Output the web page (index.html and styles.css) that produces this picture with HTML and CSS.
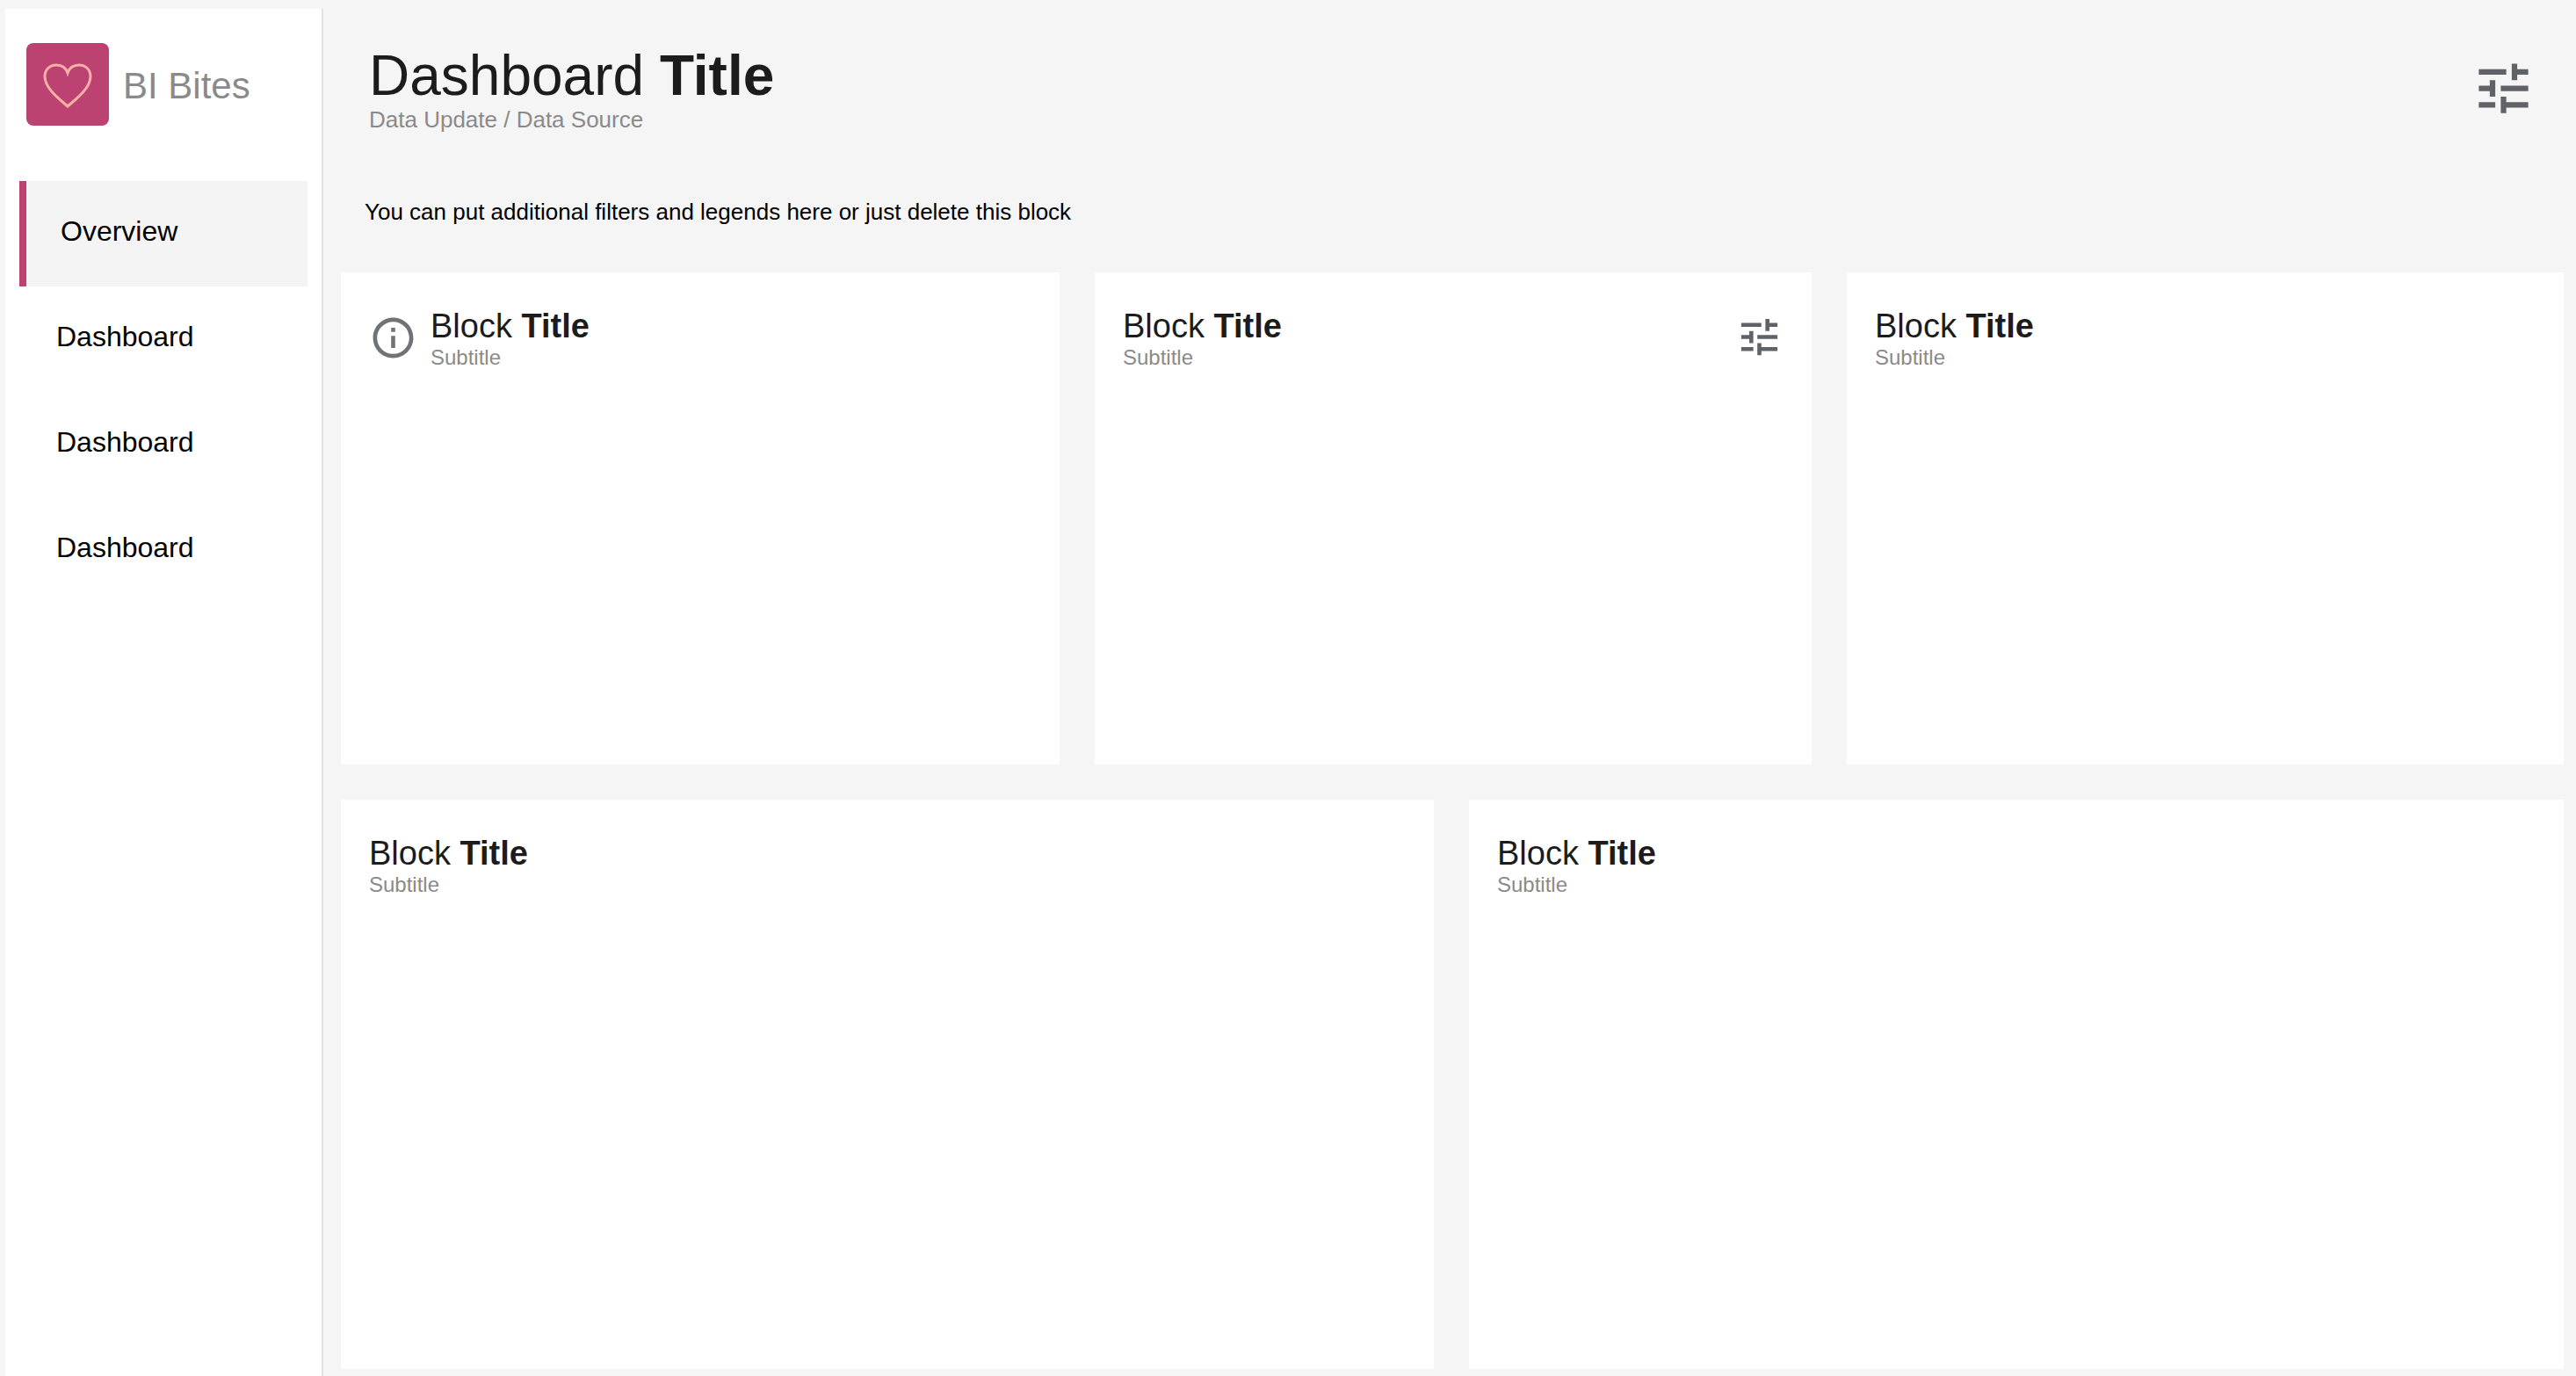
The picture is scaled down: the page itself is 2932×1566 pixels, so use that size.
FILE: index.html
```html
<!DOCTYPE html>
<html lang="en">
<head>
<meta charset="utf-8">
<title>BI Bites Dashboard</title>
<link rel="stylesheet" href="styles.css">
</head>
<body>
<div class="app">
  <aside class="sidebar">
    <div class="brand">
      <div class="logo">
        <svg class="logo-heart" viewBox="0 0 60 54"><path d="M30 50 C22 43 4 30 4 16 C4 8 10 3 17 3 C23 3 28 6 30 12 C32 6 37 3 43 3 C50 3 56 8 56 16 C56 30 38 43 30 50 Z"/></svg>
      </div>
      <span class="brand-name">BI Bites</span>
    </div>
    <nav class="nav">
      <a class="nav-item active">Overview</a>
      <a class="nav-item">Dashboard</a>
      <a class="nav-item">Dashboard</a>
      <a class="nav-item">Dashboard</a>
    </nav>
  </aside>
  <main class="main">
    <header class="page-header">
      <div>
        <h1 class="page-title">Dashboard <b>Title</b></h1>
        <p class="page-sub">Data Update / Data Source</p>
      </div>
      <svg class="tune-lg" viewBox="0 0 24 24"><path d="M3 17v2h6v-2H3zM3 5v2h10V5H3zm10 16v-2h8v-2h-8v-2h-2v6h2zM7 9v2H3v2h4v2h2V9H7zm14 4v-2H11v2h10zm-6-4h2V7h4V5h-4V3h-2v6z"/></svg>
    </header>
    <p class="filters">You can put additional filters and legends here or just delete this block</p>
    <section class="row row-three">
      <article class="card">
        <svg class="info" viewBox="0 0 24 24"><path d="M11 7h2v2h-2zm0 4h2v6h-2zm1-9C6.48 2 2 6.48 2 12s4.48 10 10 10 10-4.48 10-10S17.52 2 12 2zm0 18c-4.41 0-8-3.59-8-8s3.59-8 8-8 8 3.59 8 8-3.59 8-8 8z"/></svg>
        <div class="card-head"><h2 class="card-title">Block <b>Title</b></h2><p class="card-sub">Subtitle</p></div>
      </article>
      <article class="card">
        <div class="card-head"><h2 class="card-title">Block <b>Title</b></h2><p class="card-sub">Subtitle</p></div>
        <svg class="tune" viewBox="0 0 24 24"><path d="M3 17v2h6v-2H3zM3 5v2h10V5H3zm10 16v-2h8v-2h-8v-2h-2v6h2zM7 9v2H3v2h4v2h2V9H7zm14 4v-2H11v2h10zm-6-4h2V7h4V5h-4V3h-2v6z"/></svg>
      </article>
      <article class="card">
        <div class="card-head"><h2 class="card-title">Block <b>Title</b></h2><p class="card-sub">Subtitle</p></div>
      </article>
    </section>
    <section class="row row-two">
      <article class="card">
        <div class="card-head"><h2 class="card-title">Block <b>Title</b></h2><p class="card-sub">Subtitle</p></div>
      </article>
      <article class="card">
        <div class="card-head"><h2 class="card-title">Block <b>Title</b></h2><p class="card-sub">Subtitle</p></div>
      </article>
    </section>
  </main>
</div>
</body>
</html>
```
FILE: styles.css
```css
* { box-sizing: border-box; margin: 0; padding: 0; }
html, body { height: 100%; overflow: hidden; }
body { background: #f5f5f5; font-family: "Liberation Sans", Arial, sans-serif; }
.app { display: flex; height: 1566px; padding: 10px 14px 0 6px; }

.sidebar { width: 362px; flex: none; background: #fff; border-right: 2px solid #e2e2e2; padding: 39px 16px 0 16px; }
.brand { display: flex; align-items: center; gap: 16px; padding-left: 8px; }
.logo { width: 94px; height: 94px; border-radius: 8px; background: #bb4271; display: flex; align-items: center; justify-content: center; }
.logo-heart { width: 60px; height: 54px; margin-top: 4px; fill: none; stroke: #f9b0a8; stroke-width: 3; }
.brand-name { font-size: 42px; color: #8a8a8a; padding-top: 3px; }
.nav { display: flex; flex-direction: column; margin-top: 63px; }
.nav-item { height: 120px; display: flex; align-items: center; padding: 0 0 5px 42px; font-size: 32px; color: #000; }
.nav-item.active { background: #f4f4f4; border-left: 8px solid #bb4271; padding-left: 39px; }

.main { flex: 1; min-width: 0; padding-left: 20px; display: flex; flex-direction: column; }
.page-header { display: flex; justify-content: space-between; padding: 41px 4px 0 32px; height: 220px; }
.page-title { font-size: 64px; font-weight: 400; line-height: 70px; color: #1c1c1c; }
.page-title b, .card-title b { font-weight: 700; }
.page-sub { font-size: 26px; line-height: 30px; color: #8a8a8a; }
.tune-lg { width: 75px; height: 75px; fill: #5f6368; margin-top: 12px; margin-right: 27px; }
.filters { font-size: 26px; line-height: 30px; color: #000; padding-left: 27px; margin-top: -4px; height: 84px; }

.row { display: grid; gap: 40px; }
.row-three { grid-template-columns: 818fr 816fr 816fr; height: 560px; margin-bottom: 40px; }
.row-two { grid-template-columns: 1244fr 1246fr; height: 648px; }
.card { background: #fff; padding: 39px 32px 0 32px; display: flex; align-items: flex-start; }
.card-head { flex: 1; }
.card-title { font-size: 38px; font-weight: 400; line-height: 44px; color: #1c1c1c; }
.card-sub { font-size: 24px; line-height: 28px; color: #8a8a8a; }
.info { width: 55px; height: 55px; fill: #6f7276; margin: 8px 15px 0 0; }
.tune { width: 55px; height: 55px; fill: #5f6368; margin-top: 7px; }
```
